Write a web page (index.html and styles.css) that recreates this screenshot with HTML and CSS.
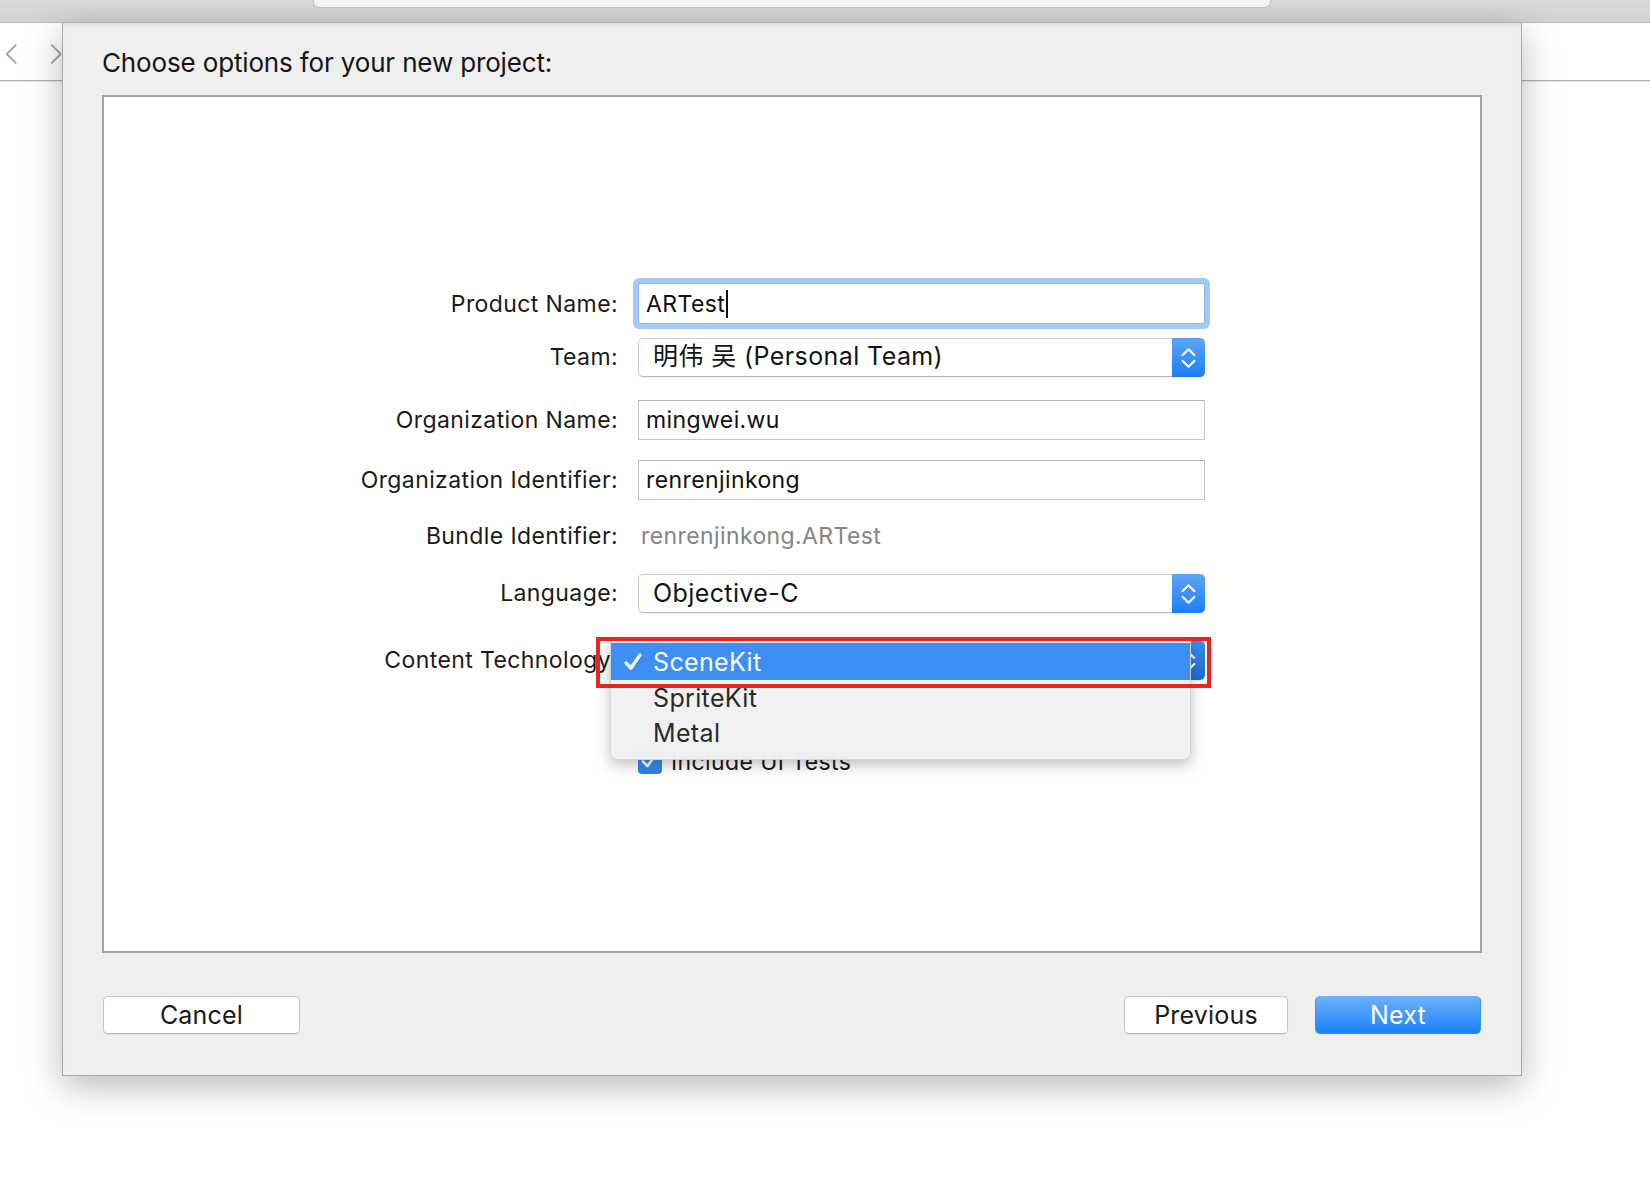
FILE: index.html
```html
<!DOCTYPE html>
<html lang="en">
<head>
<meta charset="utf-8">
<title>Choose options for your new project</title>
<link rel="stylesheet" href="styles.css">
</head>
<body>
<div class="toolbar"><div class="segment"></div></div>
<div class="main">
  <div class="side side-left">
    <div class="nav">
      <svg class="nav-arrow" viewBox="0 0 14 24" width="14" height="24"><path d="M12 2 L2 12 L12 22" /></svg>
      <svg class="nav-arrow nav-fwd" viewBox="0 0 14 24" width="14" height="24"><path d="M2 2 L12 12 L2 22" /></svg>
    </div>
    <div class="hline"></div>
  </div>

  <div class="dialog">
    <h1 class="title">Choose options for your new project:</h1>
    <div class="panel">
      <div class="form">
        <div class="row">
          <span class="label">Product Name:</span>
          <div class="field focus"><span class="value">ARTest</span><span class="caret"></span></div>
        </div>
        <div class="row gap-14">
          <span class="label">Team:</span>
          <div class="popup">
            <span class="popup-text popup-cjk">明伟 吴 (Personal Team)</span>
            <span class="stepper"><svg viewBox="0 0 34 40" width="34" height="40"><path d="M11 17 L17 11 L23 17" /><path d="M11 23 L17 29 L23 23" /></svg></span>
          </div>
        </div>
        <div class="row gap-23">
          <span class="label">Organization Name:</span>
          <div class="field"><span class="value">mingwei.wu</span></div>
        </div>
        <div class="row gap-20">
          <span class="label">Organization Identifier:</span>
          <div class="field"><span class="value">renrenjinkong</span></div>
        </div>
        <div class="row gap-16">
          <span class="label">Bundle Identifier:</span>
          <span class="static">renrenjinkong.ARTest</span>
        </div>
        <div class="row gap-17">
          <span class="label">Language:</span>
          <div class="popup">
            <span class="popup-text">Objective-C</span>
            <span class="stepper"><svg viewBox="0 0 34 40" width="34" height="40"><path d="M11 17 L17 11 L23 17" /><path d="M11 23 L17 29 L23 23" /></svg></span>
          </div>
        </div>
        <div class="row gap-27 row-menu">
          <span class="label">Content Technology:</span>
          <div class="popup popup-open">
            <span class="popup-text">SceneKit</span>
            <span class="stepper stepper-dark"><svg viewBox="0 0 34 40" width="34" height="40"><path d="M11 17 L17 11 L23 17" /><path d="M11 23 L17 29 L23 23" /></svg></span>
            <div class="menu">
              <div class="menu-item selected">
                <svg class="check" viewBox="0 0 20 20" width="20" height="20"><path d="M3 11 L8 16 L17 3" /></svg>
                <span>SceneKit</span>
              </div>
              <div class="menu-item"><span>SpriteKit</span></div>
              <div class="menu-item"><span>Metal</span></div>
            </div>
            <div class="annotation"></div>
          </div>
        </div>
        <div class="row gap-62">
          <span class="label"></span>
          <div class="checkrow">
            <span class="checkbox"><svg viewBox="0 0 22 22" width="22" height="22"><path d="M5 11.5 L9.5 16 L17 6" /></svg></span>
            <span class="check-label">Include UI Tests</span>
          </div>
        </div>
      </div>
    </div>
    <div class="buttons">
      <button class="btn btn-cancel">Cancel</button>
      <div class="btn-group">
        <button class="btn btn-prev">Previous</button>
        <button class="btn btn-next">Next</button>
      </div>
    </div>
  </div>

  <div class="side side-right">
    <div class="hline hline-right"></div>
  </div>
</div>
</body>
</html>
```

FILE: styles.css
```css
* { box-sizing: border-box; }

html, body {
  margin: 0;
  padding: 0;
  background: #ffffff;
}

body {
  width: 1650px;
  height: 1196px;
  overflow: hidden;
  font-family: "Inter", "Noto Sans CJK SC", sans-serif;
  color: #1b1b1b;
}

.toolbar {
  height: 23px;
  background: linear-gradient(#dadada, #d1d1d1);
  border-bottom: 1px solid #b9b9b9;
  padding-left: 313px;
}

.segment {
  width: 958px;
  height: 8px;
  background: #f7f7f7;
  border: 1px solid #c4c4c4;
  border-top: none;
  border-radius: 0 0 6px 6px;
}

.main {
  display: flex;
  align-items: flex-start;
}

.side {
  height: 1053px;
  background: #ffffff;
}

.side-left {
  width: 62px;
  flex: none;
}

.nav {
  height: 57px;
  display: flex;
  align-items: center;
  gap: 32px;
  padding-left: 5px;
  padding-top: 4px;
}

.nav-arrow path {
  fill: none;
  stroke: #a2a2a2;
  stroke-width: 2;
  stroke-linecap: round;
  stroke-linejoin: round;
}

.hline {
  height: 2px;
  background: #b4b4b4;
  border-bottom: 1px solid #e2e2e2;
}

.side-right {
  flex: 1;
}

.hline-right {
  margin-top: 57px;
}

.dialog {
  position: relative;
  z-index: 2;
  width: 1460px;
  flex: none;
  background: #efefef;
  border: 1px solid #a9a9a9;
  border-top: none;
  padding: 24px 39px 41px 39px;
  box-shadow: 0 10px 34px rgba(0, 0, 0, 0.28), inset 0 4px 6px -4px rgba(0, 0, 0, 0.12);
}

.title {
  margin: 0;
  font-size: 26px;
  font-weight: 400;
  line-height: 32px;
  color: #151515;
  letter-spacing: -0.15px;
}

.panel {
  margin-top: 16px;
  width: 1380px;
  height: 858px;
  background: #ffffff;
  border: 2px solid #a2a2a2;
}

.form {
  padding-top: 186px;
}

.row {
  display: grid;
  grid-template-columns: 514px 567px;
  column-gap: 20px;
  align-items: center;
  height: 40px;
}

.gap-14 { margin-top: 14px; }
.gap-16 { margin-top: 16px; }
.gap-17 { margin-top: 17px; }
.gap-20 { margin-top: 20px; }
.gap-23 { margin-top: 23px; }
.gap-27 { margin-top: 27px; }
.gap-62 { margin-top: 62px; }

.label {
  text-align: right;
  font-size: 23px;
  letter-spacing: 0.4px;
  color: #1a1a1a;
  white-space: nowrap;
}

.field {
  height: 40px;
  background: #ffffff;
  border: 1px solid #c9c9c9;
  border-top-color: #b4b4b4;
  display: flex;
  align-items: center;
  padding-left: 7px;
  font-size: 23px;
  letter-spacing: 0.4px;
  color: #111111;
}

.field.focus {
  border: 1px solid #8cb8ef;
  border-radius: 2px;
  box-shadow: 0 0 0 5px #a5c8f5;
  height: 41px;
}

.caret {
  display: inline-block;
  width: 2px;
  height: 28px;
  background: #111111;
  margin-left: 1px;
}

.static {
  font-size: 23px;
  letter-spacing: 0.4px;
  color: #858585;
  padding-left: 3px;
}

.popup {
  position: relative;
  height: 39px;
  background: #ffffff;
  border: 1px solid #cdcdcd;
  border-bottom-color: #b8b8b8;
  border-radius: 5px;
  display: flex;
  align-items: center;
  box-shadow: 0 1px 1px rgba(0, 0, 0, 0.06);
}

.popup-text {
  flex: 1;
  padding-left: 14px;
  font-size: 25px;
  letter-spacing: 0.4px;
  color: #141414;
}

.popup-cjk {
  line-height: 30px;
  margin-top: -3px;
}

.stepper {
  width: 33px;
  height: 39px;
  margin: -1px -1px -1px 0;
  border-radius: 0 5px 5px 0;
  background: linear-gradient(#5ba6fa, #1d7ef3);
  display: flex;
}

.stepper svg path {
  fill: none;
  stroke: #ffffff;
  stroke-width: 2.2;
  stroke-linecap: round;
  stroke-linejoin: round;
}

.stepper-dark {
  background: linear-gradient(#3d8cee, #1f6cd3);
}

.row-menu .popup {
  height: 40px;
}

.menu {
  position: absolute;
  z-index: 5;
  left: -29px;
  top: -2px;
  width: 581px;
  height: 121px;
  padding-top: 3px;
  background: rgba(241, 241, 241, 0.98);
  border: 1px solid rgba(0, 0, 0, 0.12);
  border-top-color: rgba(0, 0, 0, 0.05);
  border-radius: 0 0 7px 7px;
  box-shadow: 0 5px 14px rgba(0, 0, 0, 0.25);
}

.menu-item {
  height: 35px;
  display: flex;
  align-items: center;
  padding-left: 42px;
  font-size: 25px;
  letter-spacing: 0.35px;
  color: #2a2a2a;
}

.menu-item.selected {
  height: 37px;
  background: #3d8ff6;
  color: #ffffff;
  padding-left: 12px;
  gap: 10px;
}

.check path {
  fill: none;
  stroke: #ffffff;
  stroke-width: 3.2;
  stroke-linecap: round;
  stroke-linejoin: round;
}

.annotation {
  position: absolute;
  z-index: 6;
  left: -43px;
  top: -4px;
  width: 615px;
  height: 51px;
  border: 4px solid #ea2420;
}

.checkrow {
  display: flex;
  align-items: center;
  gap: 9px;
}

.checkbox {
  width: 24px;
  height: 24px;
  border-radius: 4px;
  background: linear-gradient(#4a9bf8, #2b80ef);
  display: flex;
}

.checkbox path {
  fill: none;
  stroke: #ffffff;
  stroke-width: 2.6;
  stroke-linecap: round;
  stroke-linejoin: round;
}

.check-label {
  font-size: 23px;
  letter-spacing: 0.4px;
  color: #1a1a1a;
}

.buttons {
  margin-top: 43px;
  display: flex;
  justify-content: space-between;
  padding-left: 1px;
  padding-right: 1px;
}

.btn-group {
  display: flex;
  gap: 27px;
}

.btn {
  height: 38px;
  font-family: "Inter", sans-serif;
  font-size: 25px;
  letter-spacing: 0.2px;
  color: #1a1a1a;
  background: #ffffff;
  border: 1px solid #c6c6c6;
  border-bottom-color: #b3b3b3;
  border-radius: 5px;
  box-shadow: 0 1px 1px rgba(0, 0, 0, 0.06);
  padding: 0;
}

.btn-cancel { width: 197px; }
.btn-prev { width: 164px; }

.btn-next {
  width: 166px;
  color: #ffffff;
  background: linear-gradient(#6cb1fb, #1a80fb);
  border: 1px solid #3f8ff0;
  border-top-color: #72b3f8;
}
```
